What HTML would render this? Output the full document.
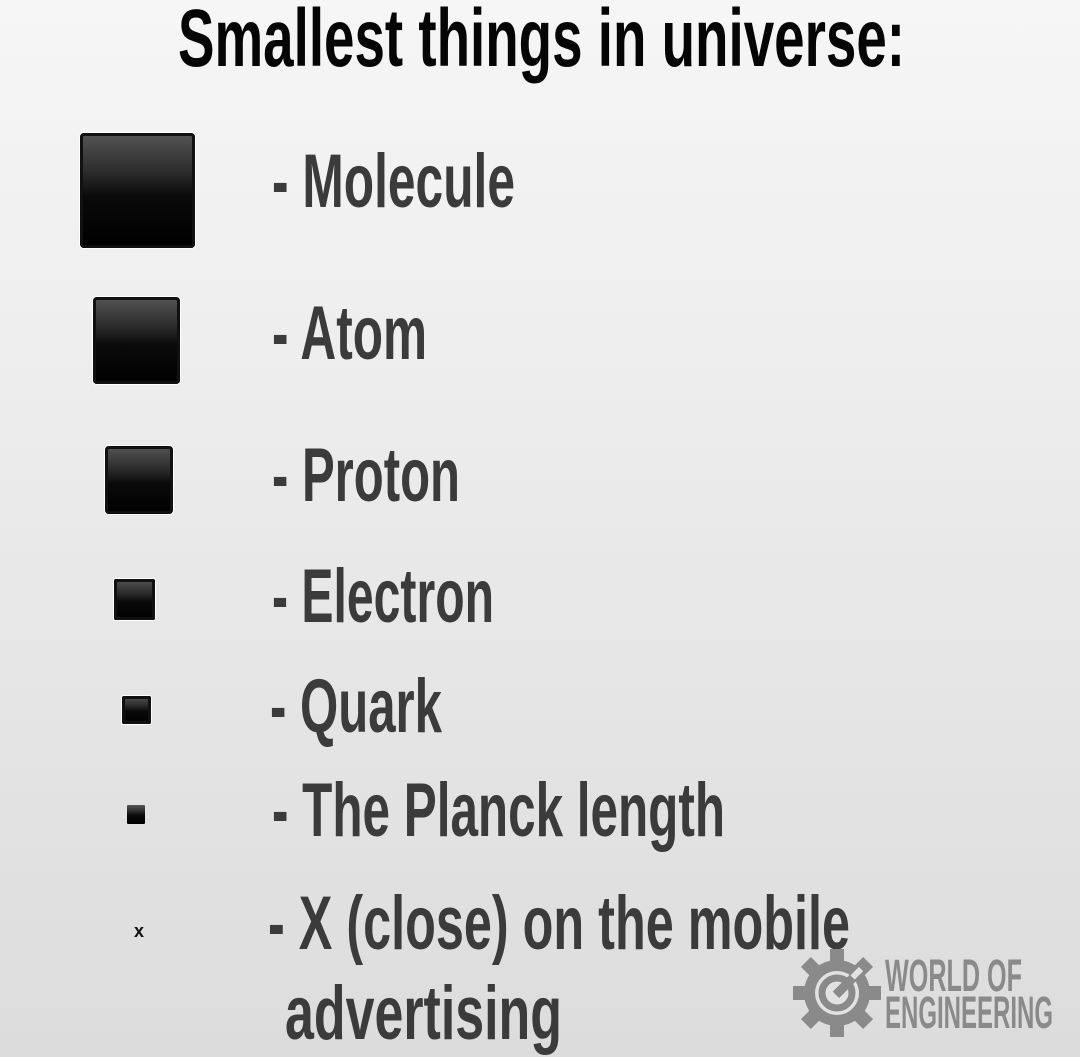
<!DOCTYPE html>
<html><head><meta charset="utf-8"><style>
html,body{margin:0;padding:0}
body{width:1080px;height:1057px;overflow:hidden;position:relative;background:linear-gradient(#f6f6f6,#ececec 40%,#dcdcdc);font-family:"Liberation Sans Narrow","Liberation Sans",sans-serif;font-weight:bold}
.t{position:absolute;white-space:nowrap;line-height:1;transform-origin:0 0;color:#3b3b3b;font-size:76px}
.sq{position:absolute;border-radius:4px;background:linear-gradient(#555 0%,#2a2a2a 35%,#0a0a0a 55%,#000 100%);box-shadow:inset 0 0 0 3px #111,0 0 0 1px #fff}
</style></head><body>
<div class="t" style="left:178px;top:-2px;font-size:82px;color:#050505" data-tw="727">Smallest things in universe:</div>
<div class="t" style="left:272px;top:144px" data-tw="243">- Molecule</div>
<div class="t" style="left:272px;top:296px" data-tw="155">- Atom</div>
<div class="t" style="left:272px;top:438px" data-tw="188">- Proton</div>
<div class="t" style="left:272px;top:559px" data-tw="222">- Electron</div>
<div class="t" style="left:270px;top:669px" data-tw="172">- Quark</div>
<div class="t" style="left:272px;top:773px" data-tw="453">- The Planck length</div>
<div class="t" style="left:268px;top:886px" data-tw="582">- X (close) on the mobile</div>
<div class="t" style="left:285px;top:976px" data-tw="277">advertising</div>
<div class="sq" style="left:80px;top:133px;width:115px;height:115px"></div>
<div class="sq" style="left:93px;top:297px;width:87px;height:87px"></div>
<div class="sq" style="left:105px;top:446px;width:68px;height:68px"></div>
<div class="sq" style="left:114px;top:579px;width:41px;height:41px;border-radius:2px"></div>
<div class="sq" style="left:122px;top:696px;width:29px;height:28px;border-radius:2px"></div>
<div class="sq" style="left:127px;top:805px;width:18px;height:19px;border-radius:1px;box-shadow:none"></div>
<div style="position:absolute;left:134px;top:922px;font-size:18px;color:#111;line-height:1">x</div>
<svg style="position:absolute;left:792px;top:948px" width="90" height="90" viewBox="-45 -45 90 90">
<g fill="#8a8a8a">
<circle r="33"/>
<g id="tooth"><rect x="-7" y="-44" width="14" height="16"/></g>
<use href="#tooth" transform="rotate(45)"/><use href="#tooth" transform="rotate(90)"/><use href="#tooth" transform="rotate(135)"/><use href="#tooth" transform="rotate(180)"/><use href="#tooth" transform="rotate(225)"/><use href="#tooth" transform="rotate(270)"/><use href="#tooth" transform="rotate(315)"/>
</g>
<circle r="22" fill="#e2e2e2"/>
<circle r="15" fill="none" stroke="#8a8a8a" stroke-width="7"/>
<rect x="-4" y="-30" width="9" height="32" fill="#8a8a8a" transform="rotate(45)"/>
<rect x="-3" y="-34" width="6" height="12" fill="#e2e2e2" transform="rotate(45)"/>
</svg>
<div class="t" style="left:885px;top:953px;font-size:45px;color:#8a8a8a" data-tw="137">WORLD OF</div>
<div class="t" style="left:885px;top:990px;font-size:45px;color:#8a8a8a" data-tw="168">ENGINEERING</div>
<script>
document.querySelectorAll('.t').forEach(function(e){var w=e.getBoundingClientRect().width;var tw=+e.getAttribute('data-tw');if(w>0&&tw)e.style.transform='scaleX('+(tw/w)+')';});
</script>
</body></html>
